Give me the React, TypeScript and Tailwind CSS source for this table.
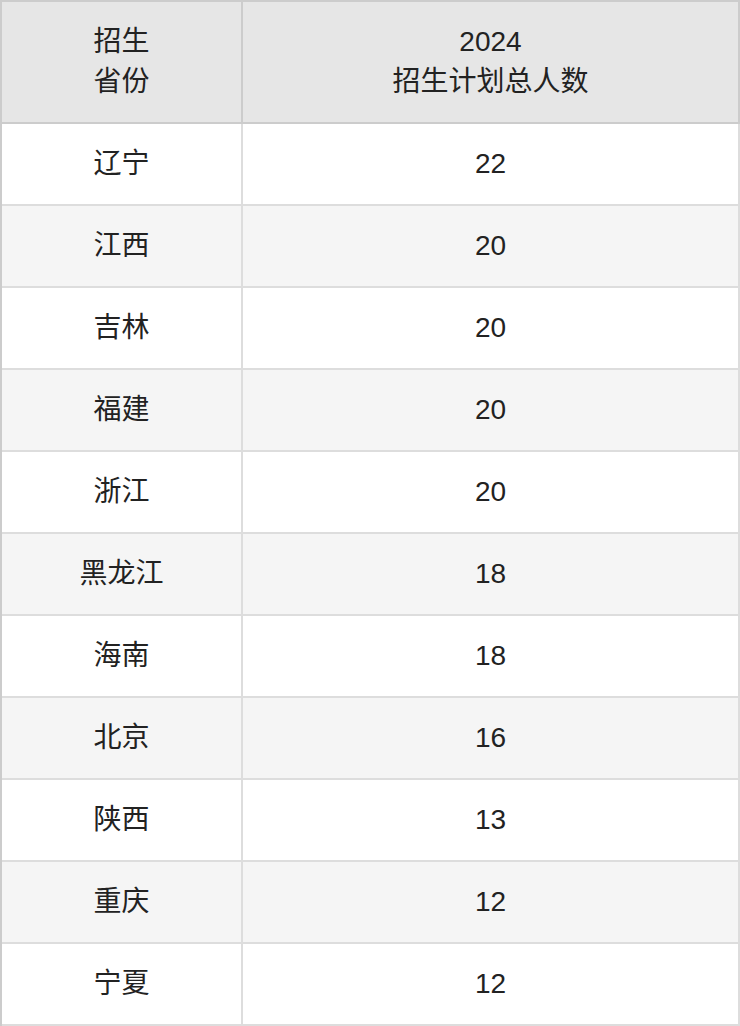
const rows = [
  { p: "辽宁", n: "22" },
  { p: "江西", n: "20" },
  { p: "吉林", n: "20" },
  { p: "福建", n: "20" },
  { p: "浙江", n: "20" },
  { p: "黑龙江", n: "18" },
  { p: "海南", n: "18" },
  { p: "北京", n: "16" },
  { p: "陕西", n: "13" },
  { p: "重庆", n: "12" },
  { p: "宁夏", n: "12" },
];

const App = () => (
  <div
    className="w-[740px] bg-white text-[#222] text-[28px] leading-[40px]"
    style={{ fontFamily: '"Liberation Sans", "Noto Sans CJK SC", sans-serif' }}
  >
    <div className="border-t-2 border-l-2 border-[#cccccc]">
      {/* header */}
      <div className="grid grid-cols-[241px_1fr] bg-[#e6e6e6]">
        <div className="h-[122px] flex flex-col items-center justify-center border-r-2 border-b-2 border-[#cccccc]">
          <span>招生</span>
          <span>省份</span>
        </div>
        <div className="h-[122px] flex flex-col items-center justify-center border-r-2 border-b-2 border-[#cccccc]">
          <span>2024</span>
          <span>招生计划总人数</span>
        </div>
      </div>
      {rows.map((r, i) => (
        <div
          key={r.p}
          className={`grid grid-cols-[241px_1fr] ${i % 2 === 1 ? "bg-[#f5f5f5]" : "bg-white"}`}
        >
          <div className="h-[82px] flex items-center justify-center border-r-2 border-b-2 border-[#dddddd]">
            {r.p}
          </div>
          <div className="h-[82px] flex items-center justify-center border-r-2 border-b-2 border-[#dddddd]">
            {r.n}
          </div>
        </div>
      ))}
    </div>
  </div>
);

export default App;
